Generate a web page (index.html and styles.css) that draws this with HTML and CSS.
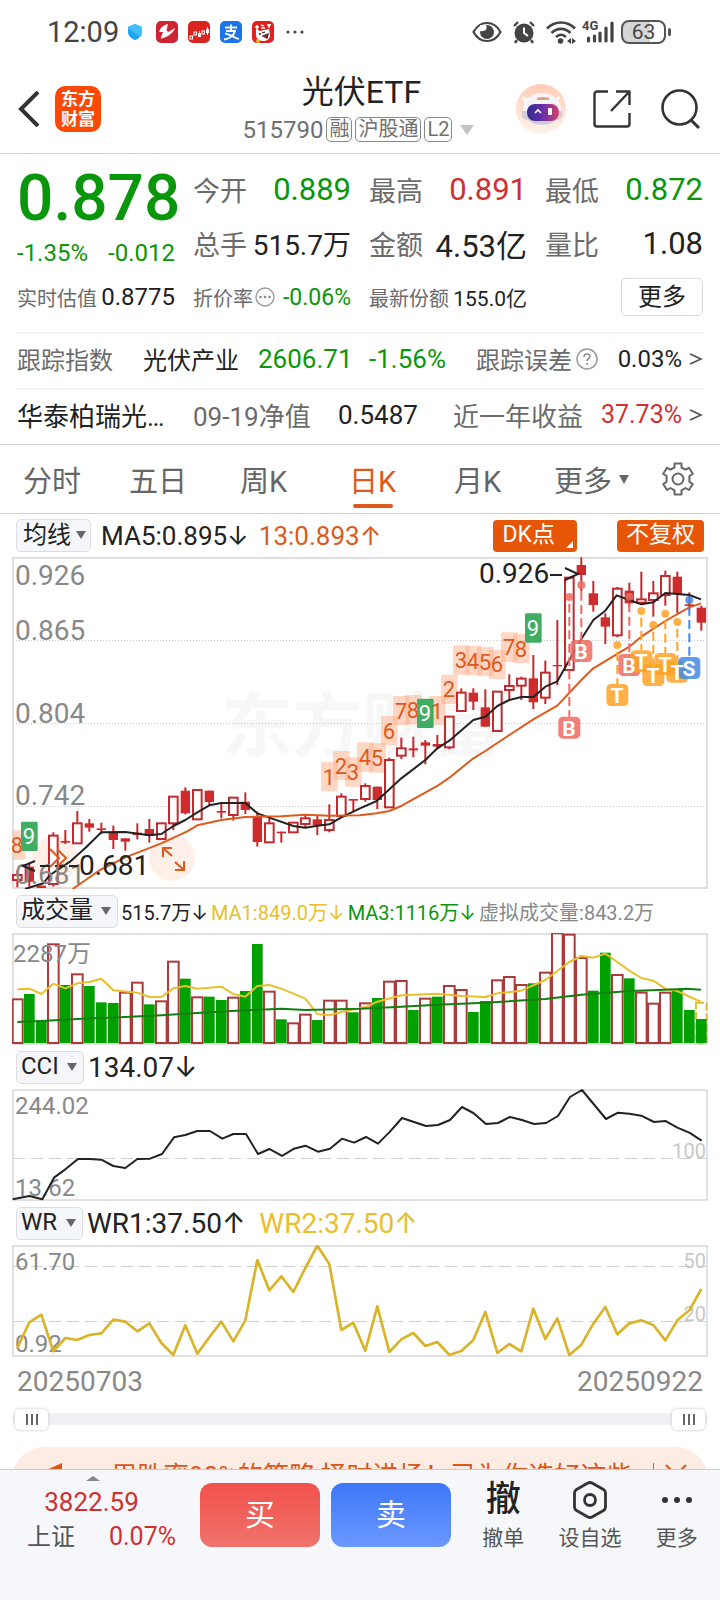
FILE: index.html
```html
<!DOCTYPE html>
<html lang="zh-CN">
<head>
<meta charset="utf-8">
<meta name="viewport" content="width=device-width, initial-scale=1">
<title>光伏ETF 515790</title>
<link rel="stylesheet" href="styles.css">
</head>
<body>
<div class="app">
  <div class="status">
    <span class="clock">12:09</span>
    <svg class="shield" viewBox="0 0 14 16" width="14" height="16"><path d="M7 0 14 3v5c0 4-3 6.500-7 8C3 14.500 0 12 0 8V3z" fill="#1ea5f4"/><path d="M7 0 14 3v5c0 2-1 4-2 5L0 4V3z" fill="#3fc0fa"/></svg>
    <svg viewBox="0 0 22 22" width="22" height="22"><rect width="22" height="22" rx="5" fill="#cf2433"/><path d="M12 3C7 4 3 8 3.500 11L7 11 4.500 17.500C10 17 17 13 19 7L12.500 11 10.500 9.500z" fill="#fff"/></svg>
    <svg viewBox="0 0 22 22" width="22" height="22"><rect width="22" height="22" rx="5" fill="#d9251f"/><g fill="none" stroke="#fff"><rect x="2" y="15" width="2.500" height="3"/><rect x="6" y="11" width="2.500" height="3"/><rect x="14" y="10" width="2.500" height="3"/></g><path d="M10 12h3v4h-3zM11 10h1v2h-1zM18 8h3v4h-3zM19 6h1v8h-1z" fill="#fff"/></svg>
    <svg viewBox="0 0 22 22" width="22" height="22"><rect width="22" height="22" rx="5" fill="#1b74ea"/><path d="M5 6.500h12M11 3.500v6M6 10h9c-1 4-5 8-11 8.500M5 12.500c4 0 8 4 14 5.500" fill="none" stroke="#fff" stroke-width="1.800"/></svg>
    <svg viewBox="0 0 22 22" width="22" height="22"><rect width="22" height="22" rx="5" fill="#e0211f"/><path d="M3 6h4M5 4v5M9 4l3 1M9 7h4M15 4h4M17 3v4" stroke="#fff" stroke-width="1.500"/><path d="m4 8 4 2 4-1 5-1 1 6c0 4-3 6-7 6s-7-3-7-6z" fill="#fff"/><path d="M7 13h2M10 12l3-1M11 15l5-2-1 4z" stroke="#3a1a1a" stroke-width="1.300" fill="#e33"/><circle cx="6" cy="20" r="2" fill="#f5c22b"/></svg>
    <svg class="more-dots" viewBox="0 0 18 4" width="18" height="4" fill="#444"><circle cx="2" cy="2" r="1.600"/><circle cx="9" cy="2" r="1.600"/><circle cx="16" cy="2" r="1.600"/></svg>
    <span class="spring"></span>
    <svg viewBox="0 0 30 22" width="30" height="22"><path d="M1.500 11C8-1 22-1 28.500 11 22 23 8 23 1.500 11z" fill="none" stroke="#444" stroke-width="2.200"/><circle cx="15" cy="11" r="7" fill="#444"/><path d="M8 4h6c2 4-1 7-6 6z" fill="#fff"/><path d="M9 4.500h5" stroke="#fff"/></svg>
    <svg viewBox="0 0 24 24" width="24" height="24"><circle cx="12" cy="13" r="9.500" fill="#444"/><path d="M2 6 6 2M22 6l-4-4M5 20l-2 3M19 20l2 3" stroke="#444" stroke-width="2.400"/><path d="M12 7.500V13l4 3" fill="none" stroke="#fff" stroke-width="2"/></svg>
    <svg viewBox="0 0 30 24" width="30" height="24"><g fill="none" stroke="#444" stroke-width="2.600"><path d="M1 8.500c8-8 20-8 28 0M5.500 13c5.500-5.500 13.500-5.500 19 0M10 17c3-3 7-3 10 0"/></g><circle cx="14.500" cy="21" r="2.800" fill="#444"/><path d="m25 18-4 3 4 3zM26 18l4 3-4 3z" fill="#444"/></svg>
    <span class="signal"><span class="net">4G</span><svg viewBox="0 0 30 22" width="30" height="22"><path d="M3.500 20v-3M9.500 20v-5M15 20v-8M21 20V7M27 20V2" stroke="#444" stroke-width="3.200" stroke-linecap="round"/></svg></span>
    <span class="battery">63</span>
  </div>

  <header class="head">
    <button class="icon-btn" aria-label="返回"><svg viewBox="0 0 22 36" width="22" height="36"><path d="M20 1 3 18l17 17" fill="none" stroke="#333" stroke-width="4"/></svg></button>
    <a class="logo" href="#">东方<br>财富</a>
    <div class="title">
      <h1>光伏ETF</h1>
      <div class="sub"><span>515790</span><span class="tag">融</span><span class="tag">沪股通</span><span class="tag">L2</span><i class="tri wide"></i></div>
    </div>
    <button class="icon-btn" aria-label="智能助手"><svg viewBox="0 0 50 50" width="50" height="50"><defs><linearGradient id="halo" x2="0" y2="1"><stop stop-color="#ffcdb5"/><stop offset="1" stop-color="#fff3ec"/></linearGradient><linearGradient id="visor"><stop stop-color="#2d2a8c"/><stop offset=".5" stop-color="#6a2fa8"/><stop offset="1" stop-color="#d8436a"/></linearGradient></defs><circle cx="25" cy="25" r="25" fill="url(#halo)"/><path d="m6 12 8 4-5 5zM44 12l-8 4 5 5z" fill="#fff"/><ellipse cx="26" cy="25" rx="19" ry="16" fill="#f6f4f8"/><path d="M9 31c4 13 30 13 34 0z" fill="#cfc8d6"/><path d="M6 27h5v9c-4 0-6-4-5-9zM41 27h5c1 5-1 9-5 9z" fill="#d7cdd8"/><rect x="11" y="20" width="32" height="17" rx="8" fill="url(#visor)"/><path d="m19 29 3-3 3 3" fill="none" stroke="#fff" stroke-width="1.600"/><rect x="32" y="24" width="4" height="7" rx="1" fill="#fff"/><path d="M21 14q5-2 12 0v2H21z" fill="#dda37c"/></svg></button>
    <button class="icon-btn share" aria-label="分享"><svg viewBox="0 0 38 38" width="38" height="38"><g fill="none" stroke="#333" stroke-width="2.400" stroke-linejoin="round"><path d="M15 1.500H4A2.500 2.500 0 0 0 1.500 4v30A2.500 2.500 0 0 0 4 36.500h30a2.500 2.500 0 0 0 2.500-2.500V23"/><path d="M23 1.500h13.500V15M36 2 18 21"/></g></svg></button>
    <button class="icon-btn" aria-label="搜索"><svg viewBox="0 0 40 40" width="40" height="40"><circle cx="18.500" cy="18.500" r="17" fill="none" stroke="#333" stroke-width="2.600"/><path d="m30 31 8 8" stroke="#333" stroke-width="3"/></svg></button>
  </header>

  <main class="content">
    <section class="quote">
      <div class="grid">
        <div class="last"><strong>0.878</strong><div class="pair s24 down"><span>-1.35%</span><span>-0.012</span></div></div>
        <div class="pair big"><span class="lab">今开</span><span class="down">0.889</span></div>
        <div class="pair big"><span class="lab">最高</span><span class="up">0.891</span></div>
        <div class="pair big"><span class="lab">最低</span><span class="down">0.872</span></div>
        <div class="pair big"><span class="lab">总手</span><span class="s28">515.7万</span></div>
        <div class="pair big"><span class="lab">金额</span><span>4.53亿</span></div>
        <div class="pair big"><span class="lab">量比</span><span>1.08</span></div>
        <div class="pair small"><span class="lab">实时估值</span><span class="s24">0.8775</span></div>
        <div class="pair small"><span class="lab with-icon">折价率<svg viewBox="0 0 20 20" width="20" height="20"><circle cx="10" cy="10" r="9" fill="none" stroke="#999" stroke-width="1.400"/><g fill="#888"><circle cx="5.500" cy="10" r="1.300"/><circle cx="10" cy="10" r="1.300"/><circle cx="14.500" cy="10" r="1.300"/></g></svg></span><span class="down s23">-0.06%</span></div>
        <div class="pair small"><span class="lab">最新份额</span><span>155.0亿</span></div>
        <div class="pair end"><button class="more">更多</button></div>
      </div>
      <div class="line index">
        <span class="lab">跟踪指数</span><span>光伏产业</span><span class="down s26">2606.71</span><span class="down s26">-1.56%</span>
        <span class="pair"><span class="lab with-icon">跟踪误差<svg viewBox="0 0 22 22" width="22" height="22"><circle cx="11" cy="11" r="10" fill="none" stroke="#999" stroke-width="1.500"/><path d="M8 9c0-4 6-4 6-.500 0 2-3 2-3 4.500M11 15v2" fill="none" stroke="#888" stroke-width="1.600"/></svg></span><span class="go">0.03%<svg viewBox="0 0 14 12" width="14" height="12"><path d="M1 1l11 5-11 5" fill="none" stroke="#555" stroke-width="1.800"/></svg></span></span>
      </div>
      <div class="line fund">
        <span>华泰柏瑞光…</span><span class="lab">09-19净值</span><span>0.5487</span>
        <span class="pair"><span class="lab">近一年收益</span><span class="go up">37.73%<svg viewBox="0 0 14 12" width="14" height="12"><path d="M1 1l11 5-11 5" fill="none" stroke="#555" stroke-width="1.800"/></svg></span></span>
      </div>
    </section>

    <nav class="tabs">
      <button>分时</button><button>五日</button><button>周K</button><button class="on">日K</button><button>月K</button><button>更多<i class="tri"></i></button>
      <button aria-label="设置"><svg viewBox="0 0 34 34" width="34" height="34"><path d="M13.500 1.500h7v4l4 2.200 3.500-1.900 3.800 6-3.400 2.200v5.800l3.400 2.200-3.800 6-3.500-2-4 2.300v4.200h-7v-4.200l-4-2.300-3.500 2-3.800-6 3.400-2.200V14L2.200 11.800l3.800-6 3.500 1.900 4-2.200z" fill="none" stroke="#666" stroke-width="2" stroke-linejoin="round"/><circle cx="17" cy="17" r="5.500" fill="none" stroke="#666" stroke-width="2"/></svg></button>
    </nav>

    <section class="charts">
      <div class="legend first">
        <label class="pick tight"><select aria-label="主图指标"><option>均线</option></select></label>
        <span class="s26">MA5:0.895<b>↓</b></span><span class="s26 ma">13:0.893<b>↑</b></span>
        <button class="chip dk">DK点</button><button class="chip">不复权</button>
      </div>
      <svg class="panel" viewBox="0 0 696 332" role="img" aria-label="日K线图">
        <text class="mark" x="210" y="194">东方财富</text>
        <rect class="frame light" x="1" y="1" width="694" height="330"/>
        <path class="dots" d="M1 83.500h694M1 166.500h694M1 249.500h694"/>
        <text class="axis s28" x="3" y="28">0.926</text><text class="axis s28" x="3" y="83">0.865</text><text class="axis s28" x="3" y="166">0.804</text><text class="axis s28" x="3" y="248">0.742</text>
        <circle class="pad" cx="160" cy="301" r="23"/><circle class="pad" cx="43" cy="302" r="23"/>
        <g transform="scale(.33333)">
          <g id="counts"></g>
          <g id="candles"></g>
          <polyline class="ma5" points="39,996 94,979 114,954 174,914 224,869 268,826 340,825 412,835 448,831 484,807 520,789 556,766 592,745 628,738 700,738 736,769 772,782 844,807 880,812 916,806 952,802 988,781 1024,764 1044,754 1094,732 1168,664 1240,609 1276,574 1312,551 1384,489 1420,479 1456,447 1492,429 1528,420 1564,420 1600,389 1636,373 1672,309 1708,246 1744,189 1780,161 1814,115 1852,129 1888,142 1924,136 1960,108 2032,114 2067,127"/>
          <polyline class="ma13" points="182,996 264,939 340,901 448,859 524,824 556,805 628,789 700,780 808,778 880,773 952,776 1044,775 1094,769 1132,762 1168,747 1276,687 1312,662 1384,604 1420,582 1492,534 1564,487 1636,446 1708,369 1744,334 1852,269 1888,239 1960,192 2032,151 2067,139"/>
          <g id="trades"></g>
        </g>
        <g id="badges"></g>
        <text class="axis s28" x="3" y="327">0.681</text>
        <text class="peak" x="467" y="26">0.926</text><path class="ink" d="M538 18h12M553 11l13 6-13 6"/>
        <text class="peak" x="67" y="318">0.681</text><path class="ink" d="M23 304l-12 5 12 5M28 309h10M43 309h10M57 309h9"/>
        <path class="hot" d="M151 300v-9h9M151 291l9 8M172 304v9h-9M172 313l-9-8M38 292l9 9-9 9M45 292l9 9-9 9"/>
      </svg>

      <div class="legend vol">
        <label class="pick"><select aria-label="成交量指标"><option>成交量</option></select></label>
        <span class="s20">515.7万<b>↓</b></span><span class="s20 gold">MA1:849.0万<b>↓</b></span><span class="s20 down">MA3:1116万<b>↓</b></span><span class="s20 grey">虚拟成交量:843.2万</span>
      </div>
      <svg class="panel" viewBox="0 0 696 112" role="img" aria-label="成交量">
        <rect class="frame" x="1" y="1" width="694" height="110"/>
        <g transform="translate(-12 -13) scale(.33333)">
          <g id="volumes"></g>
          <polyline class="vma gold-line" points="52,208 88,206 124,222 160,191 196,205 232,190 268,186 304,176 340,211 412,218 448,231 484,231 520,205 556,198 592,206 664,200 700,222 736,230 772,198 808,195 844,206 916,236 952,282 988,286 1024,276 1100,260 1132,245 1204,226 1312,221 1384,228 1456,231 1492,220 1564,212 1636,180 1708,126 1744,108 1780,113 1816,101 1852,126 1888,152 1924,174 1960,182 1996,206 2032,213 2103,246"/>
          <polyline class="vma green-line" points="52,306 124,303 232,297 360,292 484,286 592,279 736,271 844,266 916,270 1080,266 1204,260 1312,254 1456,248 1636,237 1744,224 1888,213 1996,209 2060,206 2103,209"/>
        </g>
        <text class="axis s24" x="1" y="29">2287万</text>
      </svg>

      <div class="legend">
        <label class="pick"><select aria-label="副图指标一"><option>CCI</option></select></label>
        <span class="s28 lead">134.07<b>↓</b></span>
      </div>
      <svg class="panel" viewBox="0 0 696 112" role="img" aria-label="CCI">
        <rect class="frame" x="1" y="1" width="694" height="110"/>
        <path class="dash" d="M1 69.500h694"/>
        <text class="axis s24" x="3" y="25">244.02</text><text class="axis s24" x="3" y="107">13.62</text><text class="level" x="694" y="69">100</text>
        <g transform="translate(-12 -169) scale(.33333)">
          <polyline class="ma5" points="38,838 88,828 127,838 162,773 196,748 234,717 270,717 304,719 340,738 376,744 412,717 450,716 486,702 522,652 556,645 592,633 630,633 667,656 700,642 738,642 774,702 808,687 846,708 882,686 916,677 954,695 990,686 1026,656 1062,668 1098,651 1134,671 1170,635 1206,594 1278,618 1314,615 1350,600 1386,561 1420,579 1458,612 1494,609 1530,591 1566,600 1602,612 1638,609 1674,588 1710,531 1746,510 1818,597 1854,578 1888,581 1924,587 1962,606 1996,603 2032,623 2068,638 2105,662"/>
        </g>
      </svg>

      <div class="legend">
        <label class="pick"><select aria-label="副图指标二"><option>WR</option></select></label>
        <span class="s28">WR1:37.50<b>↑</b></span><span class="s28 gold">WR2:37.50<b>↑</b></span>
      </div>
      <svg class="panel" viewBox="0 0 696 112" role="img" aria-label="WR">
        <rect class="frame" x="1" y="1" width="694" height="110"/>
        <path class="dash" d="M1 21.500h694M1 76.500h694"/>
        <text class="axis s24" x="3" y="25">61.70</text><text class="axis s24" x="3" y="107">0.92</text><text class="level" x="694" y="23">50</text><text class="level" x="694" y="76">20</text>
        <g transform="scale(.33333)"><polyline id="wr" class="wr"/></g>
      </svg>

      <div class="dates"><span>20250703</span><span>20250922</span></div>
      <div class="range"><input type="range" min="0" max="100" value="0" aria-label="开始日期"><input type="range" min="0" max="100" value="100" aria-label="结束日期"></div>
    </section>

    <aside class="promo">
      <svg viewBox="0 0 34 30" width="34" height="30"><path d="M33 0v24L15 17V8z" fill="#d9571a"/></svg>
      <p>用胜率90%的策略,择时进场！已为你选好这些</p>
      <span class="bar"></span>
      <button aria-label="关闭"><svg viewBox="0 0 24 24" width="24" height="24"><path d="m2 2 20 20M22 2 2 22" stroke="#d9571a" stroke-width="2"/></svg></button>
    </aside>
  </main>

  <footer class="dock">
    <a class="market" href="#"><i class="tri upward"></i><span class="s26">3822.59</span><span class="pair"><span class="name">上证</span><span class="s25">0.07%</span></span></a>
    <button class="trade buy">买</button>
    <button class="trade sell">卖</button>
    <button class="tool"><span class="pic glyph">撤</span>撤单</button>
    <button class="tool"><span class="pic"><svg viewBox="0 0 36 38" width="36" height="38"><path d="M15.500 2.200a5 5 0 0 1 5 0l11 6.300a4 4 0 0 1 2 3.500v14a4 4 0 0 1-2 3.500l-11 6.300a5 5 0 0 1-5 0l-11-6.300a4 4 0 0 1-2-3.500V12a4 4 0 0 1 2-3.500z" fill="none" stroke="#333" stroke-width="2.800"/><circle cx="18" cy="19" r="5.500" fill="none" stroke="#333" stroke-width="2.800"/></svg></span>设自选</button>
    <button class="tool"><span class="pic"><svg viewBox="0 0 32 8" width="32" height="8" fill="#333"><circle cx="4" cy="4" r="3"/><circle cx="16" cy="4" r="3"/><circle cx="28" cy="4" r="3"/></svg></span>更多</button>
  </footer>
</div>
<script src="chart.js"></script>
</body>
</html>
```
FILE: styles.css
```css
* { box-sizing: border-box; }
body {
  margin: 0;
  background: #fff;
  color: #222;
  font-family: Roboto, Inter, "Noto Sans CJK SC", sans-serif;
}
button, select, input { font: inherit; color: inherit; margin: 0; }
button { border: 0; background: none; padding: 0; }
a { color: inherit; text-decoration: none; }
svg { display: block; flex: none; }
.app { height: 100vh; display: flex; flex-direction: column; }

.s20 { font-size: 20px; }
.s23 { font-size: 23px; }
.s24 { font-size: 24px; }
.s25 { font-size: 25px; }
.s26 { font-size: 26px; }
.s28 { font-size: 28px; }
.up { color: #cf3030; }
.down { color: #0a960a; }
.gold { color: #e8bf2c; }
.grey { color: #888; }
.ma { color: #dd5a1c; }

.tri { display: inline-block; border: 5px solid transparent; border-top: 9px solid #666; border-bottom: 0; }
.tri.wide { border-width: 10px 7px 0; border-top-color: #c4c4c4; }
.tri.upward { border-width: 0 7px 5px; border-bottom: 5px solid #888; }

/* status bar */
.status { height: 62px; flex: none; display: flex; align-items: center; gap: 10px; padding: 2px 54px 0 47px; }
.clock { font-size: 29px; color: #444; }
.shield { margin: 0 4px 0 -1px; }
.more-dots { margin-left: 2px; }
.spring { flex: 1; margin-right: 5px; }
.signal { position: relative; margin-left: -1px; }
.net { position: absolute; left: -3px; top: -2px; font-size: 13px; line-height: 13px; font-weight: 700; color: #444; }
.battery {
  position: relative; width: 45px; height: 24px; margin-left: -4px; border: 2px solid #555; border-radius: 8px;
  background: linear-gradient(90deg, #d6d6d6 66%, #fff 66%); font-size: 21px; line-height: 21px; text-align: center; color: #444;
}
.battery::after { content: ""; position: absolute; right: -7px; top: 6px; width: 3px; height: 8px; border-radius: 2px; background: #555; }

/* header */
.head { height: 92px; flex: none; display: flex; align-items: center; padding: 2px 19px 0 18px; border-bottom: 1px solid #d0d0d0; }
.icon-btn { flex: none; }
.logo {
  width: 46px; height: 46px; margin-left: 15px; padding-top: 3px; border-radius: 10px; background: #fb4a08; color: #fff;
  font-size: 17px; line-height: 20px; font-weight: 700; text-align: center;
}
.title { flex: 1; text-align: center; margin-left: 106px; }
h1 { margin: 0; font-size: 32px; line-height: 42px; font-weight: 400; }
.sub { display: flex; justify-content: center; align-items: center; gap: 3px; margin-right: 6px; font-size: 24px; line-height: 34px; color: #707070; }
.tag { height: 25px; padding: 0 2px; border: 1px solid #888; border-radius: 5px; font-size: 20px; line-height: 23px; }
.sub .tri { margin-left: 5px; }
.share { margin: 0 30px 0 27px; }

/* quote */
.content { flex: 1; min-height: 0; overflow: hidden; }
.quote { padding: 0 17px; border-bottom: 1px solid #d0d0d0; }
.grid {
  display: grid; grid-template-columns: repeat(4, minmax(0, 1fr)); grid-auto-rows: 54px; column-gap: 18px;
  padding: 8px 0; border-bottom: 2px solid #f4f4f4;
}
.pair { display: flex; align-items: center; justify-content: space-between; white-space: nowrap; }
.last { grid-row: span 2; display: flex; flex-direction: column; }
.last strong { font-size: 64px; line-height: 74px; font-weight: 500; color: #0a960a; text-align: center; }
.last .pair { line-height: 34px; }
.lab { color: #6b6b6b; }
.big { font-size: 31px; }
.big .lab { font-size: 27px; }
.big .s28 { font-size: 28px; }
.small { font-size: 21px; }
.small .lab { font-size: 20px; }
.small .s23 { font-size: 23px; }
.small .s24 { font-size: 24px; }
.end { justify-content: flex-end; }
.more { width: 82px; height: 38px; border: 1px solid #d9dadc; border-radius: 5px; font-size: 24px; line-height: 34px; }
.with-icon { display: flex; align-items: center; gap: 4px; }
.small .with-icon { gap: 2px; }
.line { display: grid; align-items: center; white-space: nowrap; font-size: 24px; height: 56px; padding-bottom: 5px; }
.index { grid-template-columns: 126fr 115fr 111fr 107fr 227fr; border-bottom: 2px solid #f4f4f4; }
.fund { grid-template-columns: 176fr 145fr 115fr 250fr; font-size: 26px; height: 54px; }
.go { display: flex; align-items: center; gap: 7px; }
.fund .go { font-size: 25px; }

/* period tabs */
.tabs { height: 69px; display: grid; grid-template-columns: 106fr 111fr 109fr 105fr 100fr 107fr 34px; padding: 0 25px 0 23px; border-bottom: 1px solid #d0d0d0; color: #666; font-size: 29px; }
.tabs button { position: relative; display: flex; align-items: center; gap: 7px; justify-self: start; }
.tabs .on { color: #dd5a1c; }
.tabs .on::after { content: ""; position: absolute; left: 50%; bottom: 5px; width: 40px; height: 4px; margin-left: -20px; border-radius: 2px; background: #dd5a1c; }

/* charts */
.charts { padding: 0 12px; }
.legend { height: 44px; display: flex; align-items: center; gap: 8px; padding-left: 4px; white-space: nowrap; }
.legend.first { height: 43px; gap: 10px; }
.legend.vol { gap: 3px; }
.legend b { font-family: Inter, sans-serif; font-weight: 400; }
.pick { position: relative; flex: none; display: flex; }
.pick::after { content: ""; position: absolute; right: 7px; top: 12px; border: 5px solid transparent; border-top: 8px solid #666; border-bottom: 0; pointer-events: none; }
.pick select {
  appearance: none; height: 33px; padding: 0 24px 2px 4px; border: 1px solid #dcdde0; border-radius: 5px;
  background: #f5f6f9; font-size: 24px; line-height: 28px;
}
.pick.tight select { padding: 0 19px 2px 6px; }
.pick.tight::after { right: 5px; }
.legend .s28 { margin-left: -4px; margin-right: 10px; }
.chip { position: relative; height: 32px; padding: 0 9px 2px; border-radius: 4px; background: #e75507; color: #fff; font-size: 23px; line-height: 30px; margin-right: 4px; }
.chip.dk { margin-left: auto; margin-right: 30px; padding-right: 22px; }
.chip.dk::after { content: ""; position: absolute; right: 4px; bottom: 4px; border-left: 7px solid transparent; border-bottom: 7px solid #fff; }
.panel { width: 100%; height: auto; }
.frame { fill: none; stroke: #c4c4c4; }
.frame.light { stroke: #dfdfdf; stroke-width: 2; }
.dots { stroke: #c8c8c8; stroke-dasharray: 1 2; }
.dash { stroke: #d0d0d0; stroke-dasharray: 12 6; }
.axis { fill: #888; }
.level { fill: #c8c8c8; font-size: 20px; text-anchor: end; }
.mark { fill: #f7f7f7; font-size: 70px; font-weight: 700; }
.peak { fill: #222; font-size: 28px; }
.ink { fill: none; stroke: #222; stroke-width: 2; }
.hot { fill: none; stroke: #dd5a1c; stroke-width: 2; }
.pad { fill: #fef0e8; }
.ma5, .ma13, .vma, .wr { fill: none; stroke-width: 6; stroke-linejoin: round; }
.ma5 { stroke: #222; }
.ma13 { stroke: #dd5a1c; }
.gold-line { stroke: #e8bf2c; }
.green-line { stroke: #118011; }
.wr { stroke: #d9b328; stroke-width: 8; }
.rise { fill: #fff; stroke: #bf2c30; stroke-width: 6; }
.fall { fill: #cf2a2c; }
.wick { stroke: #bf2c30; stroke-width: 6; }
.vol-up { fill: #fff; stroke: #ad3a3a; stroke-width: 6; }
.vol-down { fill: #00a000; }
.vol-est { fill: #fff; stroke: #e0c030; stroke-width: 6; stroke-dasharray: 24 8; }
.count-bg { fill: #ffb08a; fill-opacity: .5; }
.nine-bg { fill: #3fae63; }
.count { fill: #dd5a1c; font-size: 22px; text-anchor: middle; }
.nine { fill: #fff; font-size: 22px; text-anchor: middle; }
.badge { fill: #fff; font-size: 21px; font-weight: 700; text-anchor: middle; }
.tB { fill: #ee6a62; stroke: #ee6a62; }
.tT { fill: #ffa226; stroke: #ffa226; }
.tS { fill: #4489e6; stroke: #4489e6; }
.stem { stroke-width: 6; stroke-dasharray: 27 13; }
.dot { stroke: none; fill-opacity: .85; }
.badge-bg { stroke: none; fill-opacity: .85; }
.dates { display: flex; justify-content: space-between; padding: 4px 5px 0; font-size: 28px; line-height: 42px; color: #888; }
.range { position: relative; height: 12px; margin: 10px 0 22px; border-radius: 6px; background: #f0f0f3; }
.range input { appearance: none; position: absolute; left: 3px; right: 3px; top: -5px; width: calc(100% - 6px); height: 22px; background: none; pointer-events: none; }
.range input::-webkit-slider-thumb {
  appearance: none; width: 33px; height: 21px; border-radius: 5px; pointer-events: auto; box-shadow: 0 0 3px #bbb;
  background: linear-gradient(90deg, #666 2px, transparent 2px 5px, #666 5px 7px, transparent 7px 10px, #666 10px) center / 12px 11px no-repeat #fff;
}
.promo { height: 64px; margin: 0 12px; display: flex; align-items: flex-start; padding: 16px 20px 0 17px; border-radius: 32px; background: #fdece3; color: #d9571a; font-size: 26px; }
.promo p { flex: 1; margin: 0 0 0 48px; line-height: 26px; white-space: nowrap; }
.promo .bar { width: 1px; height: 24px; margin-right: 10px; background: #d9571a; }

/* bottom dock */
.dock { height: 131px; flex: none; display: flex; align-items: flex-start; padding: 0 0 0 27px; border-top: 1px solid #ccc; background: #f6f7fa; }
.market { width: 149px; display: flex; flex-direction: column; align-items: center; padding-top: 6px; color: #cf3030; font-size: 24px; line-height: 32px; }
.market .s26 { margin: 5px 20px 3px 0; }
.market .tri { margin-right: 18px; }
.market .pair { width: 100%; }
.market .name { color: #555; }
.trade { width: 120px; height: 64px; margin: 13px 0 0 11px; border-radius: 12px; color: #fff; font-size: 30px; line-height: 60px; }
.trade.buy { margin-left: 24px; background: linear-gradient(#f2514b, #ee736c); }
.trade.sell { background: linear-gradient(#3d78f8, #6b98ff); }
.tool { flex: 1; display: flex; flex-direction: column; align-items: center; font-size: 21px; line-height: 28px; color: #555; padding-top: 8px; }
.trade.sell + .tool { margin-left: 9px; }
.pic { height: 46px; display: flex; align-items: center; padding-bottom: 3px; color: #222; }
.glyph { font-size: 35px; font-weight: 500; }
```
FILE: chart.js
```js
// Chart units: three per pixel, one trading day every 36 units.
const NS = "http://www.w3.org/2000/svg";
const STEP = 36;

function add(parent, tag, attrs, text) {
  const el = document.createElementNS(NS, tag);
  for (const key in attrs) el.setAttribute(key, attrs[key]);
  if (text) el.textContent = text;
  document.getElementById(parent).appendChild(el);
}

// [high, body top, body bottom, low, rising]
const candles = [
  [939,954,969,991,1],[919,929,974,989,0],[986,986,993,993,0],[826,836,981,989,1],[819,852,857,861,0],
  [762,799,859,859,1],[786,799,812,824,0],[797,814,819,831,0],[806,827,849,876,0],[844,844,854,881,0],
  [799,827,834,847,0],[786,816,837,857,0],[799,799,846,846,1],[719,719,799,819,1],[691,701,769,772,0],
  [699,699,787,787,1],[701,701,735,744,0],[739,762,767,784,0],[722,722,774,791,1],[706,734,759,771,0],
  [764,777,855,869,0],[782,799,856,856,1],[824,824,829,857,0],[797,797,826,826,1],[776,784,801,812,1],
  [777,787,805,834,0],[742,789,819,826,1],[709,719,777,777,1],[726,726,731,764,0],[679,687,726,734,1],
  [689,689,729,756,0],[602,609,751,751,1],[542,574,596,606,1],[539,574,580,601,0],[549,556,566,622,0],
  [534,561,569,576,0],[479,479,571,577,1],[394,407,462,462,1],[394,407,434,459,0],[397,451,509,509,0],
  [404,404,522,522,1],[352,387,399,427,1],[359,365,386,429,1],[294,364,436,456,0],[311,347,422,441,1],
  [189,324,328,384,0],[62,62,339,339,1],[1,24,54,104,0],[72,109,144,164,0],[169,181,209,261,0],
  [90,95,235,241,1],[77,101,139,151,0],[44,127,137,137,1],[72,109,129,179,1],[41,57,114,146,1],
  [44,59,111,169,0],[106,142,147,159,0],[146,152,197,221,0]
];
candles.forEach(([high, top, bottom, low, rising], i) => {
  const x = 16 + STEP * i;
  const left = Math.max(x - 14, 2);
  add("candles", "line", { class: "wick", x1: x, x2: x, y1: high, y2: low });
  add("candles", "rect", { class: rising ? "rise" : "fall", x: rising ? left + 1 : left, y: top, width: x + 14 - left - (rising ? 2 : 0), height: bottom - top });
});

// [day, digit, centre]
const counts = [
  [0,8,864],[26,1,659],[27,2,626],[28,3,645],[29,4,600],[30,5,603],[31,6,521],[32,7,461],[33,8,458],[35,1,461],
  [36,2,397],[37,3,309],[38,4,311],[39,5,314],[40,6,322],[41,7,270],[42,8,275],[1,9,838],[34,9,469],[43,9,213]
];
counts.forEach(([day, digit, y]) => {
  const x = 16 + STEP * day;
  const nine = digit === 9;
  const left = Math.max(x - 25, 2);
  add("counts", "rect", { class: nine ? "nine-bg" : "count-bg", x: left, y: y - 44, width: x + 25 - left, height: 88, rx: 4 });
  add("badges", "text", { class: nine ? "nine" : "count", x: Math.round(x / 3), y: Math.round(y / 3) + 8 }, String(digit));
});

// [day, kind, dot, badge]
const trades = [
  [46,"B",120,512],[47,"B",84,282],[50,"T",264,414],[51,"B",119,324],[52,"T",162,313],
  [53,"T",204,354],[54,"T",170,321],[55,"T",195,344],[56,"S",129,333]
];
trades.forEach(([day, kind, dot, y]) => {
  const x = 16 + STEP * day;
  add("trades", "line", { class: "stem t" + kind, x1: x, x2: x, y1: dot + 20, y2: y - 33 });
  add("trades", "circle", { class: "dot t" + kind, cx: x, cy: dot, r: 12 });
  add("trades", "rect", { class: "badge-bg t" + kind, x: x - 33, y: y - 33, width: 66, height: 66, rx: 14 });
  add("badges", "text", { class: "badge", x: Math.round(x / 3), y: Math.round(y / 3) + 8 }, kind);
});

// Bar tops; negative values are falling days.
const volumes = [
  238,-222,-303,73,-195,163,-198,-247,-249,218,188,-253,244,125,-176,232,-230,-240,233,-213,-72,215,-298,310,284,-300,
  242,242,-277,250,-234,185,183,-270,236,-230,198,210,-276,-243,181,171,195,-190,158,40,44,114,-212,-98,165,-175,218,
  251,218,-208,-270,-297
];
add("volumes", "rect", { class: "vol-est", x: 2088, y: 248, width: 32, height: 122 });
volumes.forEach((value, i) => {
  const x = 52 + STEP * i;
  const left = Math.max(x - 16, 38);
  const y = Math.abs(value);
  add("volumes", "rect", { class: value < 0 ? "vol-down" : "vol-up", x: left, y: y, width: x + 16 - left, height: 369 - y });
});

const wr = [
  445,368,345,455,415,421,406,401,360,366,395,371,430,466,377,462,413,366,425,362,181,272,230,277,205,138,193,391,369,
  453,320,457,419,400,439,427,466,454,421,337,460,433,455,327,418,356,466,435,372,322,404,371,362,376,422,362,332,268
];
document.getElementById("wr").setAttribute("points", wr.map((v, i) => (16 + STEP * i) + "," + (v - 136)).join(" "));
```
